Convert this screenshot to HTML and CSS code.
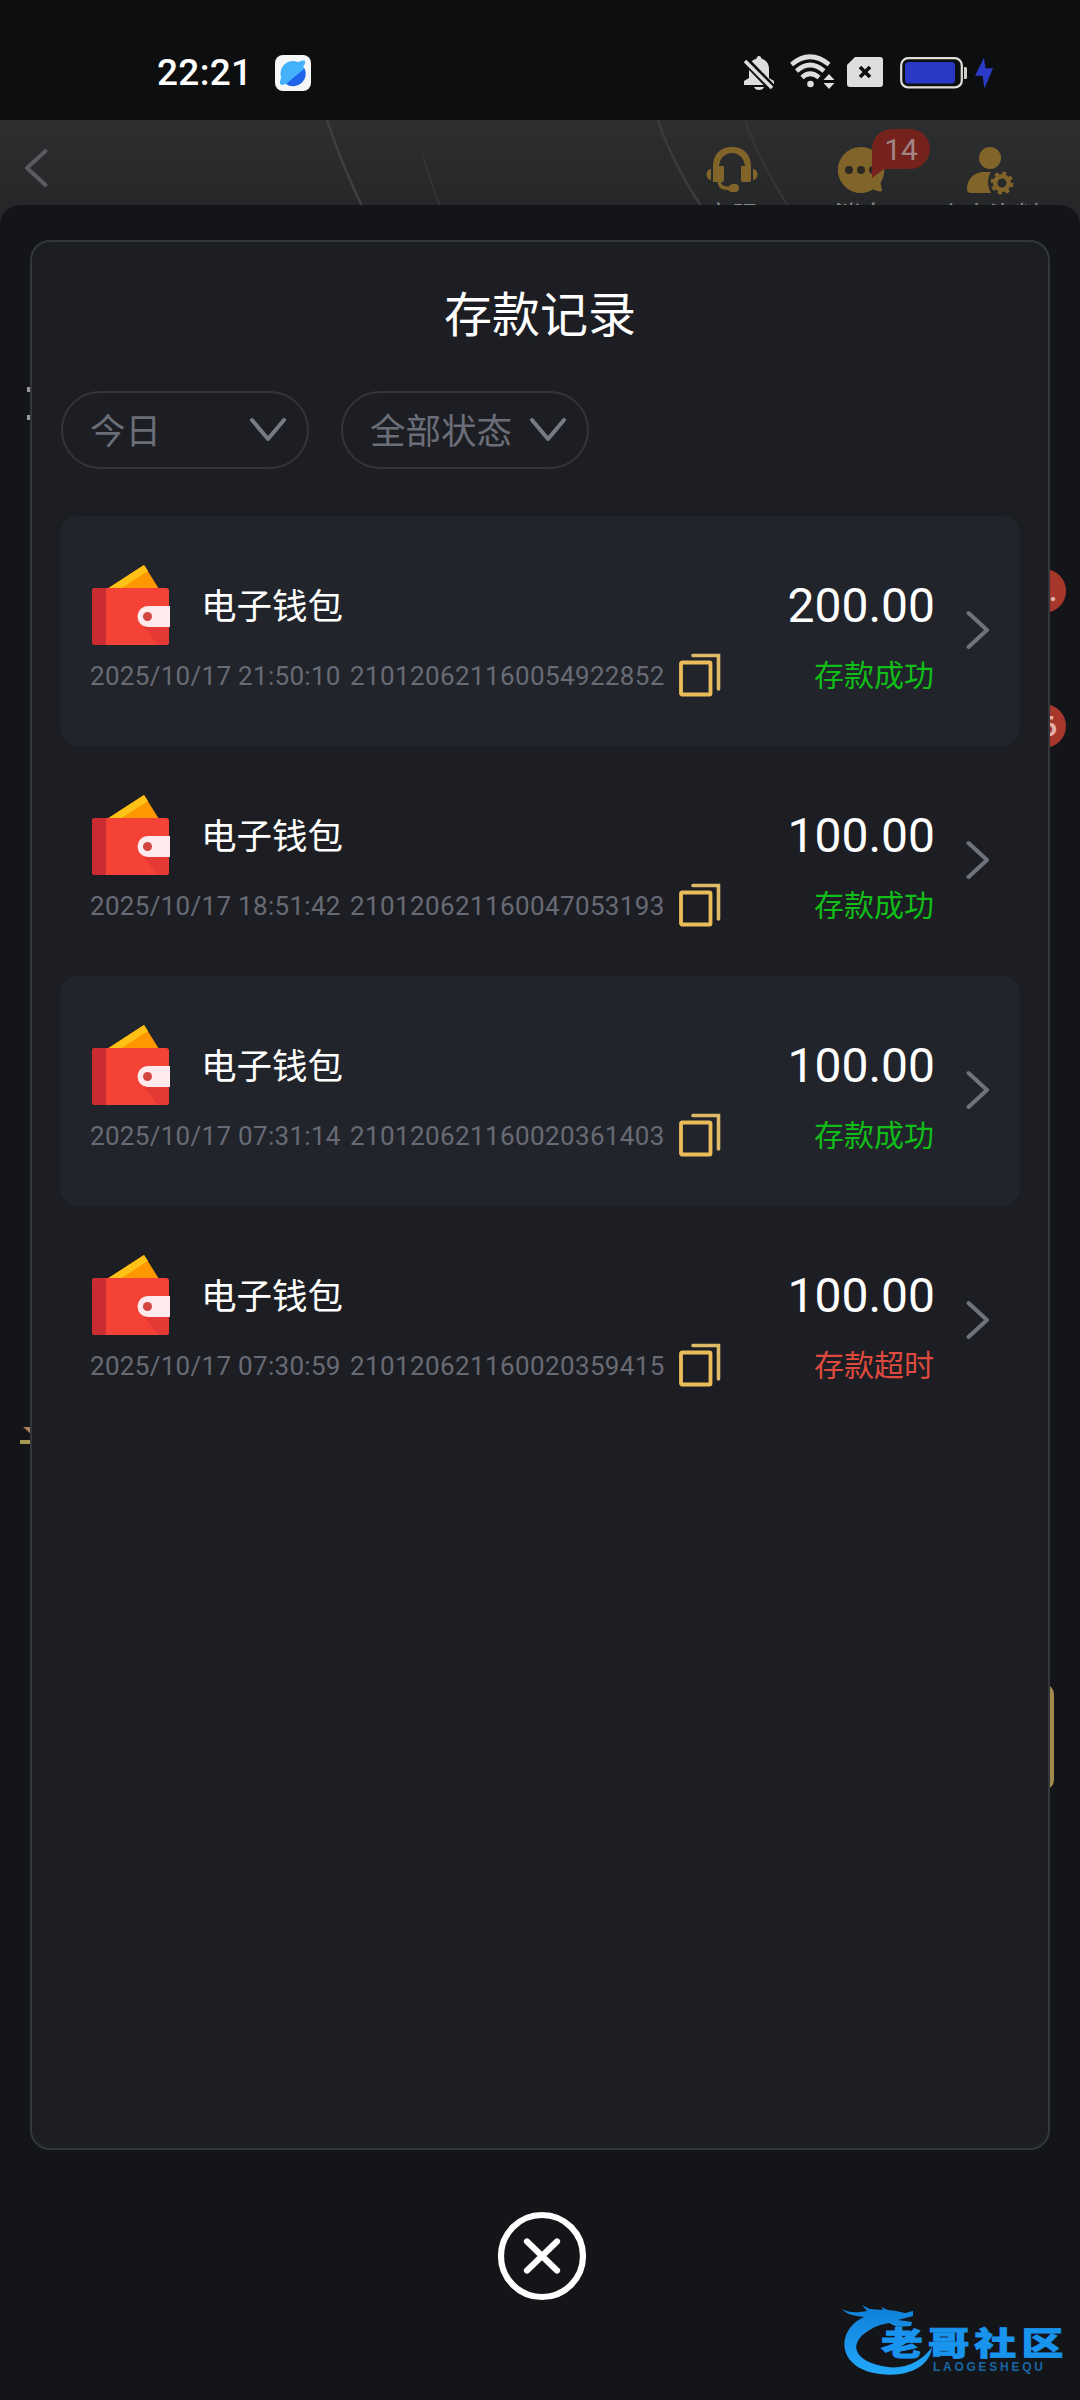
FILE: index.html
```html
<!DOCTYPE html>
<html lang="zh-CN">
<head>
<meta charset="utf-8">
<title>存款记录</title>
<link rel="stylesheet" href="styles.css">
</head>
<body>
<svg class="defs" width="0" height="0" aria-hidden="true">
  <symbol id="wallet" viewBox="0 0 80 80">
    <path d="M16 24 53 0 68 24z" fill="#ff9800"/>
    <path d="M16 24 53 0 57 6 29 24z" fill="#ffc115"/>
    <rect x="1" y="23" width="77" height="57" rx="3" fill="#f44336"/>
    <path d="M4 23h11v57H4a3 3 0 0 1-3-3V26a3 3 0 0 1 3-3z" fill="#cb2c31"/>
    <path d="M53 62h25v15a3 3 0 0 1-3 3H67z" fill="#e53935"/>
    <path d="M57 41h22v21H57a10.500 10.500 0 0 1 0-21z" fill="#ffebee"/>
    <circle cx="56.500" cy="51.500" r="4.500" fill="#d34540"/>
  </symbol>
  <symbol id="copy" viewBox="0 0 42 44">
    <path d="M14 2.500h25.500V36" fill="none" stroke="#dfba68" stroke-width="3.600" stroke-linecap="round"/>
    <rect x="2" y="9.500" width="29.500" height="32" rx="1" fill="none" stroke="#ebbd5a" stroke-width="3.800"/>
  </symbol>
  <symbol id="next" viewBox="0 0 24 40">
    <path d="M2.500 3 21 20 2.500 37" fill="none" stroke="#70737d" stroke-width="4" stroke-linecap="round" stroke-linejoin="round"/>
  </symbol>
  <symbol id="down" viewBox="0 0 38 26">
    <path d="M3 3 19 22 35 3" fill="none" stroke="#777b86" stroke-width="4" stroke-linecap="round" stroke-linejoin="round"/>
  </symbol>
</svg>

<div class="statusbar">
  <span class="clock">22:21</span>
  <svg class="app" viewBox="0 0 36 36">
    <rect width="36" height="36" rx="8" fill="#f4f6f8"/>
    <circle cx="18" cy="18.500" r="12.500" fill="#44b1fc"/>
    <path d="M29.500 13.500A12.500 12.500 0 0 1 11 29z" fill="#1e63e9"/>
    <path d="M23 7c3-1 6-2 7-1 .8 1.500-.5 4-3 7zM6.500 22c-1.500 3-2 6-1 7.500 1.500 1 4.500 0 7-1.500z" fill="#44b1fc"/>
  </svg>
  <svg class="bell" viewBox="0 0 32 36" fill="#dedede">
    <path d="M16 1c1.500 0 2.300 1 2.300 2.500C23.500 5 26 9 26 14v9l5 3v4H1v-4l5-3v-9c0-5 2.500-9 7.700-10.500C13.700 2 14.500 1 16 1z"/>
    <path d="M11 32h10c-1 4-9 4-10 0z"/>
    <path d="M1 4 30 34" stroke="#0d0e10" stroke-width="8"/>
    <path d="M2 6 29 33" stroke="#dedede" stroke-width="3.600"/>
  </svg>
  <svg class="wifi" viewBox="0 0 46 36">
    <path d="M2.500 10.500Q21-5 40 10.500M7.500 17Q21 5 35 17M13 23.500Q21 16 30 23.500" fill="none" stroke="#dedede" stroke-width="4.600"/>
    <circle cx="21.500" cy="30" r="3.300" fill="#dedede"/>
    <path d="M34.500 26h11l-5.500-6zM34.500 29h11L40 35z" fill="#dedede"/>
  </svg>
  <svg class="sim" viewBox="0 0 36 30">
    <path d="M8 0h25a3 3 0 0 1 3 3v24a3 3 0 0 1-3 3H3a3 3 0 0 1-3-3V8z" fill="#dedede"/>
    <path d="M13 10 23 20M23 10 13 20" stroke="#0d0e10" stroke-width="3.600"/>
  </svg>
  <svg class="battery" viewBox="0 0 68 32">
    <rect x="1.200" y="1.200" width="60.600" height="29.200" rx="7" fill="none" stroke="#dfdfd8" stroke-width="2.200"/>
    <rect x="5" y="5" width="50" height="21.500" rx="3.500" fill="#2938c5"/>
    <path d="M64 10h1.500a1.500 1.500 0 0 1 1.500 1.500v9a1.500 1.500 0 0 1-1.500 1.500H64z" fill="#cfcfca"/>
  </svg>
  <svg class="bolt" viewBox="0 0 20 32"><path d="M9.500 0 0 19h8l2 13 9-21h-8z" fill="#2c3ac9"/></svg>
</div>

<header class="topnav">
  <svg class="arcs" viewBox="0 0 1080 105" fill="none">
    <path d="M327 0Q342 45 362 86" stroke="#3e3f41" stroke-width="2.500"/>
    <path d="M423 35Q430 62 440 86" stroke="#333436" stroke-width="2"/>
    <path d="M658 0Q672 42 701 86" stroke="#3a3b3d" stroke-width="2.500"/>
    <path d="M745 0Q760 42 788 86" stroke="#333436" stroke-width="2.500"/>
  </svg>
  <svg class="back" viewBox="0 0 24 40"><path d="M21.500 3 3 20 21.500 37" fill="none" stroke="#595b5e" stroke-width="4" stroke-linecap="round" stroke-linejoin="round"/></svg>
  <nav class="actions">
    <div class="action">
      <svg viewBox="0 0 52 48" fill="#81642a">
        <path d="M7 36V20C7 8 15 1 26 1s19 7 19 19v14a2 2 0 0 1-2 2h-6a2 2 0 0 1-2-2V20h4C38 12 33 7 26 7S14 12 13 20h5v14a2 2 0 0 1-2 2h-1c0 3 3 4.500 8 4.500 1-1.500 2-2.500 4-2.500h2c2.500 0 4 1.500 4 4s-1.500 4-4 4h-3c-2 0-3-.8-4-2C15 44 12 41 11.500 36z"/>
        <path d="M5 23v11C-1 34-1 23 5 23zM47 23v11c6 0 6-11 0-11z"/>
      </svg>
      <span>客服</span>
    </div>
    <div class="action">
      <svg viewBox="0 0 52 48">
        <path d="M26 1a23 23 0 0 1 21 33c-1 2-2 3-1 5l1 5c0 1.500-1 1.800-2.500 1.500L38 43.500A23 23 0 1 1 26 1z" fill="#81642a"/>
        <g fill="#2b2721"><circle cx="14" cy="24" r="4"/><circle cx="26" cy="24" r="4"/><circle cx="38" cy="24" r="4"/></g>
      </svg>
      <span>消息</span>
      <div class="badge">
        <svg viewBox="0 0 58 50"><path d="M20 0h18a20 20 0 0 1 0 40H12L0 49V20A20 20 0 0 1 20 0z" fill="#75221c"/></svg>
        <b>14</b>
      </div>
    </div>
    <div class="action">
      <svg viewBox="0 0 52 48" fill="#81642a">
        <circle cx="26" cy="12" r="11"/>
        <path d="M3 43c0-10 7-17 17-17h7c-4 6-4 14 0 21H7c-2.500 0-4-1.500-4-4z"/>
        <circle cx="38" cy="37" r="6.800" fill="none" stroke="#81642a" stroke-width="4.500"/>
        <circle cx="38" cy="37" r="9.700" fill="none" stroke="#81642a" stroke-width="3.500" stroke-dasharray="4 3.620"/>
      </svg>
      <span>个人资料</span>
    </div>
  </nav>
</header>

<main class="sheet">
  <i class="peek peek-title"></i>
  <i class="peek peek-red peek-first">.</i>
  <i class="peek peek-red peek-second">6</i>
  <svg class="peek peek-mark" viewBox="0 0 12 18"><path d="M3 0h9v8z" fill="#a9825b"/><path d="M0 13h12v4H0z" fill="#a49a50"/></svg>
  <i class="peek peek-gold"></i>

  <section class="panel">
    <h1>存款记录</h1>
    <div class="filters">
      <div class="filter"><span>今日</span><svg><use href="#down"/></svg></div>
      <div class="filter"><span>全部状态</span><svg><use href="#down"/></svg></div>
    </div>
    <div class="records">
      <article class="record shaded">
        <div class="info">
          <div class="kind"><svg class="wallet"><use href="#wallet"/></svg><span>电子钱包</span></div>
          <div class="meta"><time>2025/10/17 21:50:10</time><span class="order">210120621160054922852</span><svg class="copy"><use href="#copy"/></svg></div>
        </div>
        <div class="result"><strong>200.00</strong><span class="ok">存款成功</span></div>
        <svg class="next"><use href="#next"/></svg>
      </article>
      <article class="record">
        <div class="info">
          <div class="kind"><svg class="wallet"><use href="#wallet"/></svg><span>电子钱包</span></div>
          <div class="meta"><time>2025/10/17 18:51:42</time><span class="order">210120621160047053193</span><svg class="copy"><use href="#copy"/></svg></div>
        </div>
        <div class="result"><strong>100.00</strong><span class="ok">存款成功</span></div>
        <svg class="next"><use href="#next"/></svg>
      </article>
      <article class="record shaded">
        <div class="info">
          <div class="kind"><svg class="wallet"><use href="#wallet"/></svg><span>电子钱包</span></div>
          <div class="meta"><time>2025/10/17 07:31:14</time><span class="order">210120621160020361403</span><svg class="copy"><use href="#copy"/></svg></div>
        </div>
        <div class="result"><strong>100.00</strong><span class="ok">存款成功</span></div>
        <svg class="next"><use href="#next"/></svg>
      </article>
      <article class="record">
        <div class="info">
          <div class="kind"><svg class="wallet"><use href="#wallet"/></svg><span>电子钱包</span></div>
          <div class="meta"><time>2025/10/17 07:30:59</time><span class="order">210120621160020359415</span><svg class="copy"><use href="#copy"/></svg></div>
        </div>
        <div class="result"><strong>100.00</strong><span class="late">存款超时</span></div>
        <svg class="next"><use href="#next"/></svg>
      </article>
    </div>
  </section>

  <svg class="close" viewBox="0 0 88 88" fill="none" stroke="#fff" stroke-linecap="round">
    <circle cx="44" cy="44" r="41" stroke-width="6.200"/>
    <path d="M29 29.500 59 58.500M59 29.500 29 58.500" stroke-width="6.200"/>
  </svg>

  <svg class="watermark" viewBox="0 0 230 80">
    <defs><linearGradient id="blue" x1="0" y1="0" x2="0" y2="1"><stop offset="0" stop-color="#0f7fd8"/><stop offset="1" stop-color="#22a8fa"/></linearGradient></defs>
    <path d="M22 12C-5 24-6 60 32 68c28 6 56-4 58-26-10 15-30 24-50 19C6 54 6 32 38 20l9-2 8 4 14-1 1-4-14-2 15-4V6l-8 2-9-2-8-1-7-3 2 3-13-1-8-4 5 6C17 7 9 9 0 4c5 6 14 7 22 8z" fill="url(#blue)"/>
    <text class="wm-name" transform="translate(39 50) scale(1.310 1)" x="0 35.700 71.200 107.300" y="0">老哥社区</text>
    <text class="wm-latin" x="91" y="66" textLength="110">LAOGESHEQU</text>
  </svg>
</main>
</body>
</html>
```

FILE: styles.css
```css
* { box-sizing: border-box; }

body {
  margin: 0;
  width: 1080px;
  height: 2400px;
  overflow: hidden;
  display: flex;
  flex-direction: column;
  background: #141519;
  color: #fff;
  font-family: Roboto, "Noto Sans CJK SC", sans-serif;
}

svg { display: block; flex: none; overflow: visible; }
.defs { position: absolute; }

.statusbar {
  height: 120px;
  flex: none;
  display: flex;
  align-items: center;
  padding: 26px 86px 0 157px;
  background: #0d0e10;
}
.clock { font-size: 37px; font-weight: 500; line-height: 36px; width: 118px; letter-spacing: .3px; }
.app { width: 36px; height: 36px; margin-right: auto; }
.bell { width: 32px; height: 36px; margin-right: 15px; }
.wifi { width: 46px; height: 36px; margin: -2px 12px 0 -1px; }
.sim { width: 36px; height: 30px; margin: -2px 17px 0 0; }
.battery { width: 68px; height: 32px; margin-right: 7px; }
.bolt { width: 19px; height: 32px; }

.topnav {
  position: relative;
  height: 105px;
  flex: none;
  display: flex;
  justify-content: space-between;
  align-items: flex-start;
  padding: 28px 26px 0 24px;
  background: linear-gradient(#2d2e30, #262728 85px);
}
.arcs { position: absolute; left: 0; top: 0; width: 1080px; height: 105px; }
.back { position: relative; width: 24px; height: 40px; }
.actions { display: flex; position: relative; }
.action {
  position: relative;
  width: 129px;
  display: flex;
  flex-direction: column;
  align-items: center;
  gap: 7px;
  font-size: 26px;
  line-height: 30px;
  color: #88898b;
}
.action > svg { width: 52px; height: 48px; margin-top: -2px; }
.badge { position: absolute; left: 76px; top: -19px; width: 58px; height: 50px; }
.badge svg { position: absolute; inset: 0; }
.badge b {
  position: relative;
  display: block;
  text-align: center;
  font-weight: 400;
  font-size: 30px;
  line-height: 41px;
  color: #a08584;
}

.sheet {
  position: relative;
  flex: 1;
  margin-top: -20px;
  padding: 35px 30px 0;
  display: flex;
  flex-direction: column;
  align-items: center;
  background: #141519;
  border-radius: 20px 20px 0 0;
}

.panel {
  position: relative;
  width: 1020px;
  height: 1910px;
  padding: 46px 28px 0;
  background: #1d1e23;
  border: 2px solid #33363b;
  border-radius: 20px;
}
.panel h1 {
  margin: 0;
  text-align: center;
  font-size: 48px;
  line-height: 56px;
  font-weight: 400;
}
.filters { display: flex; gap: 32px; margin-top: 47px; padding-left: 1px; }
.filter {
  width: 248px;
  height: 78px;
  display: flex;
  align-items: center;
  justify-content: space-between;
  padding: 0 20px 0 27px;
  border: 2px solid #34353a;
  border-radius: 39px;
  font-size: 35.500px;
  color: #6b6e79;
}
.filter span { margin-top: -4px; }
.filter svg { width: 38px; height: 26px; margin-top: -1px; }

.records { margin-top: 47px; }
.record {
  height: 230px;
  display: flex;
  align-items: flex-start;
  padding: 49px 30px 0;
  border-radius: 18px;
}
.shaded { background: #21242b; }
.info { flex: 1; }
.kind { display: flex; gap: 30px; font-size: 35.500px; line-height: 80px; }
.kind span { padding-top: 2px; height: 80px; }
.wallet { width: 80px; height: 80px; margin-left: 1px; }
.meta {
  display: flex;
  align-items: center;
  height: 44px;
  margin-top: 8px;
  font-size: 26px;
  letter-spacing: .3px;
  color: #686b75;
}
.meta time { width: 260px; white-space: nowrap; padding-top: 1px; }
.order { width: 329px; padding-top: 1px; letter-spacing: .38px; }
.copy { width: 42px; height: 44px; }
.result { display: flex; flex-direction: column; align-items: flex-end; }
.result strong { font-size: 48px; font-weight: 400; line-height: 56px; padding-top: 13px; }
.result span { font-size: 30px; line-height: 40px; margin: 22px 1px 0 0; }
.ok { color: #11bd17; }
.late { color: #df4a3e; }
.next { width: 24px; height: 40px; margin: 45px 0 0 31px; }

.close { width: 88px; height: 88px; margin: 62px 0 0 4px; }

/* pieces of the page below that stay visible beside the panel */
.peek { position: absolute; font-style: normal; }
.peek-title { left: 27px; top: 202px; width: 4px; height: 33px; border: solid #999; border-width: 5px 0; }
.peek-red {
  left: 1022px;
  width: 44px;
  height: 44px;
  border-radius: 22px;
  background: #a7372b;
  color: #e3b1ad;
  font-size: 27px;
  font-weight: 700;
  line-height: 46px;
  text-align: right;
}
.peek-first { top: 384px; padding-right: 9px; }
.peek-second { top: 519px; padding-right: 9px; }
.peek-mark { left: 20px; top: 1242px; width: 12px; height: 18px; }
.peek-gold { left: 1034px; top: 1499px; width: 20px; height: 106px; border-radius: 14px; background: #a1894b; }
.peek-title, .peek-red, .peek-mark, .peek-gold { transform: translateY(-20px); }

.watermark { position: absolute; left: 842px; top: 2120px; width: 230px; height: 80px; transform: translateY(-20px); }
.wm-name { font: 900 32px "Noto Sans CJK SC", sans-serif; fill: #1994ee; stroke: #1994ee; stroke-width: .8px; }
.wm-latin { font: 700 12px "Liberation Sans", sans-serif; fill: #1767a6; }
```
